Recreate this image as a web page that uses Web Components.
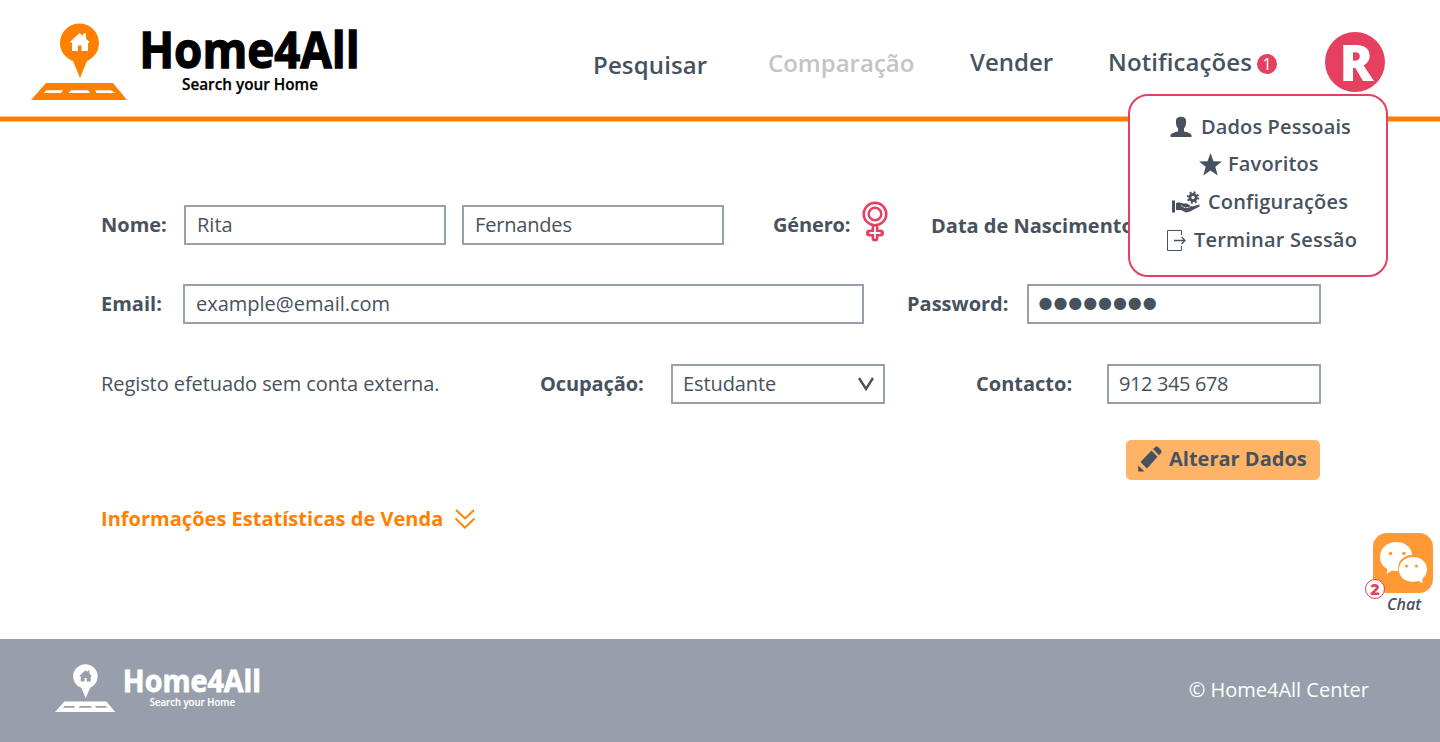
<!DOCTYPE html>
<html lang="pt">
<head>
<meta charset="utf-8">
<title>Home4All</title>
<style>
html,body{margin:0;padding:0}
body{width:1440px;height:742px;overflow:hidden;background:#fff;font-family:"Open Sans",sans-serif;color:#47525e;font-size:20px;line-height:28px}
</style>
</head>
<body>
<home-app></home-app>
<script>
const define = (name, css, html) => customElements.define(name, class extends HTMLElement {
  constructor() {
    super();
    this.attachShadow({ mode: 'open' }).innerHTML = `<style>*{box-sizing:border-box}svg{display:block;flex:none}${css}</style>${html}`;
  }
});

define('brand-logo', `:host{display:block;flex:none}svg{width:100%;height:100%;overflow:visible}
text{font-family:"Open Sans",sans-serif;fill:var(--word)}`, `
<svg viewBox="31 23 327 77" preserveAspectRatio="none">
  <path fill="var(--mark)" d="M80 78 L73 61 C65 58 60 51 60 43 A19.5 19.5 0 0 1 99 43 C99 51 94 58 87 61 Z M46 83 H113 L127 100 H31 Z"/>
  <path fill="var(--hole)" d="M69.5 42.5 L79.5 33 L83 36 V33.5 H86 V38.5 L89.5 42 L88 43.5 V51 H81.5 V45.5 H78 V51 H72 V42.5 Z M46.500 90.200 H63 L61 93 H43.500 Z M71 90.200 H88 L90 93 H68.500 Z M95 90.200 H111 L115.500 93 H96.500 Z"/>
  <text x="139.200" y="67.700" font-size="49.500" font-weight="700" textLength="220.500" lengthAdjust="spacingAndGlyphs" stroke="var(--word)" stroke-width="1.300">Home4All</text>
  <text x="182" y="90" font-size="16" font-weight="600" textLength="136" lengthAdjust="spacingAndGlyphs" stroke="var(--word)" stroke-width=".25">Search your Home</text>
</svg>`);

define('nav-item', `:host{display:flex;align-items:center;gap:5px;font-weight:600;font-size:24px;line-height:32px;white-space:nowrap}`, `<slot></slot><slot name="badge"></slot>`);

define('count-badge', `:host{display:flex;align-items:center;justify-content:center;width:20px;height:20px;border-radius:50%;background:#e54060;color:#fff;font-size:16px;line-height:20px;font-weight:400;letter-spacing:0;box-sizing:border-box;flex:none}
:host([outline]){background:#fff;border:1px solid #e54060;color:#e54060;font-weight:800;line-height:18px}`, `<slot></slot>`);

define('user-avatar', `:host{display:flex;justify-content:center;align-items:center;width:60px;height:60px;border-radius:50%;background:#e54060;color:#fff;font-weight:800;font-size:50px;line-height:60px}
span{padding-left:3px}`, `<span><slot></slot></span>`);

define('site-header', `:host{display:block;height:122px}
.bar{display:grid;grid-template-columns:562px 175px 202px 138px 217px 60px;padding-left:31px;height:116px;align-items:start}
brand-logo{width:327px;height:77px;margin-top:23px;--mark:#ff8000;--hole:#fff;--word:#000}
.line{height:6px;background:linear-gradient(#ffbf80 1px,#ff8000 1px 5px,#ffbf80 5px)}`, `
<div class="bar">
  <brand-logo></brand-logo>
  <nav-item style="margin-top:49px;letter-spacing:.14px">Pesquisar</nav-item>
  <nav-item style="margin-top:47px;color:#c4c4c4">Comparação</nav-item>
  <nav-item style="margin-top:46px">Vender</nav-item>
  <nav-item style="margin-top:46px;letter-spacing:.09px">Notificações<count-badge slot="badge" style="margin-top:4px">1</count-badge></nav-item>
  <user-avatar style="margin-top:32px">R</user-avatar>
</div><div class="line"></div>`);

define('menu-item', `:host{display:flex;align-items:center;height:38px;font-weight:600;white-space:nowrap;letter-spacing:.17px}`, `<slot name="icon"></slot><slot></slot>`);

define('user-menu', `:host{display:block;position:absolute;left:1128px;top:94px;width:260px;height:183px;box-sizing:border-box;border:2px solid #e54060;border-radius:20px;background:#fff;padding-top:12px;z-index:2}
svg{fill:#47525e}`, `
<menu-item style="padding-left:40px;height:37px;letter-spacing:.12px"><svg slot="icon" width="22" height="22" viewBox="0 0 22 22" style="margin-right:9px"><path d="M6 4 Q6.500 1 11 .8 Q15.500 1 16 4 V8 Q15.500 11 14 12 V15.500 Q20 16.500 21.500 19 V21 H.5 V19 Q2 16.500 8 15.500 V12 Q6.500 11 6 8 Z"/></svg>Dados Pessoais</menu-item>
<menu-item style="padding-left:69px"><svg slot="icon" width="23" height="23" viewBox="0 0 23 23" style="margin-right:6px"><path d="M11.500 0 L14.500 8.200 L23 8.500 L16.300 13.700 L18.700 22.500 L11.500 17.500 L4.300 22.500 L6.700 13.700 L0 8.500 L8.500 8.200 Z"/></svg>Favoritos</menu-item>
<menu-item style="padding-left:42px"><svg slot="icon" width="28" height="22" viewBox="0 0 28 22" style="margin-right:8px"><path d="M0 9.500 H3 V21.500 H0 Z M4 12 L7 11.200 L11 12.500 H15 L18 14.500 L20 15.500 L27.500 13.500 V15.500 L18 20.500 L14 21.500 L9 19 H4 Z"/><path fill="none" stroke="#fff" stroke-width=".8" stroke-dasharray="2 1" d="M9 14.500 L12 16.500 H17 L18.500 15.500"/><circle cx="21" cy="6.500" r="3.100" fill="none" stroke="#47525e" stroke-width="2.800"/><circle cx="21" cy="6.500" r="5.200" fill="none" stroke="#47525e" stroke-width="2" stroke-dasharray="2 2.084"/></svg>Configurações</menu-item>
<menu-item style="padding-left:37px;letter-spacing:.2px"><svg slot="icon" width="19" height="21" viewBox="0 0 19 21" style="margin-right:8px"><path fill="none" stroke="#47525e" d="M14.500 5 V.5 H.5 V20.500 H14.500 V16"/><path fill="none" stroke="#47525e" stroke-width="1.300" d="M7 10.500 H18 M14.500 7 L18 10.500 L14.500 14"/></svg>Terminar Sessão</menu-item>`);

define('form-row', `:host{display:grid;grid-template-columns:var(--cols);height:40px;margin-bottom:var(--gap,40px);align-items:center}`, `<slot></slot>`);
define('field-label', `:host{display:block;font-weight:700;white-space:nowrap}`, `<slot></slot>`);
define('text-field', `:host{display:flex;align-items:center;justify-content:space-between;height:40px;border:2px solid #98a0ab;box-sizing:border-box;padding:0 10px;background:#fff;white-space:nowrap}`, `<span><slot></slot></span><slot name="end"></slot>`);
define('password-dots', `:host{display:block;font-family:"DejaVu Sans",sans-serif;font-size:16px;letter-spacing:.93px;line-height:34px;height:36px;margin-left:-.5px}`, `●●●●●●●●`);

define('action-button', `:host{display:flex;align-items:center;width:194px;height:40px;box-sizing:border-box;border-radius:5px;background:#ffb366;font-weight:700;padding:0 0 2px 12px;white-space:nowrap;gap:7px}svg{fill:#47525e}`, `
<svg width="24" height="26" viewBox="0 0 24 26"><path d="M13.500 4.500 L19.500 10.800 L9 22.500 L2.500 16 Z M15 3 L18 .5 H19.500 L23.500 4.500 V6.500 L21 9.200 Z M.2 19.500 L6.500 25.500 H.2 Z"/></svg><slot></slot>`);

define('profile-form', `:host{display:block;padding:83px 0 0 101px;height:517px;box-sizing:border-box}`, `
<form-row style="--cols:83px 262px 16px 262px 49px 88px 70px 210px;--gap:39px">
  <field-label>Nome:</field-label><text-field style="padding-left:11px">Rita</text-field><i></i><text-field style="padding-left:11px;letter-spacing:-.18px">Fernandes</text-field><i></i>
  <field-label style="letter-spacing:-.15px">Género:</field-label>
  <svg width="28" height="42" viewBox="0 0 28 42" style="margin-top:-9px" fill="none" stroke="#e54060"><circle cx="14" cy="14" r="11.300" stroke-width="2.500"/><circle cx="14" cy="14" r="6.300" stroke-width="2.500"/><path stroke-width="7" stroke-linecap="round" d="M14 28 V38 M8.500 33 H19.500"/><path stroke="#fff" stroke-width="1.800" d="M14 26.500 V38.500 M8.500 33 H19.500"/></svg>
  <field-label style="margin-top:2px">Data de Nascimento:</field-label>
</form-row>
<form-row style="--cols:82px 681px 43px 120px 294px">
  <field-label>Email:</field-label><text-field style="padding-left:11px">example@email.com</text-field><i></i><field-label>Password:</field-label><text-field><password-dots></password-dots></text-field>
</form-row>
<form-row style="--cols:439px 131px 214px 91px 131px 214px;--gap:36px">
  <span style="letter-spacing:-.08px">Registo efetuado sem conta externa.</span><field-label style="letter-spacing:-.1px">Ocupação:</field-label>
  <text-field style="letter-spacing:-.1px">Estudante<svg slot="end" width="16" height="14" viewBox="0 0 16 14" fill="none" stroke="#47525e" stroke-width="2.400" style="margin-right:-1px"><path d="M1 1 L8 12 L15 1"/></svg></text-field><i></i>
  <field-label>Contacto:</field-label><text-field style="letter-spacing:-.38px">912 345 678</text-field>
</form-row>
<form-row style="--cols:1025px 194px;--gap:19px"><i></i><action-button>Alterar Dados</action-button></form-row>
<form-row style="--cols:354px 22px"><field-label style="color:#ff8000;letter-spacing:.02px">Informações Estatísticas de Venda</field-label>
<svg width="20" height="20" viewBox="0 0 20 20" fill="none" stroke="#ff8000" stroke-width="1.900"><path d="M1 1 L10 9.500 L19 1 M.5 9.500 L10 18.700 L19.500 9.500"/></svg></form-row>`);

define('chat-launcher', `:host{display:block;position:absolute;left:1365px;top:533px;width:68px;height:84px}
.tile{margin-left:8px;width:60px;height:60px;border-radius:14px;background:#ff9933}
count-badge{position:absolute;left:0;top:46px}
em{display:block;font-size:16px;line-height:22px;font-weight:600;margin-left:22px}`, `
<div class="tile"><svg width="60" height="60" viewBox="0 0 60 60"><path fill="#fff" d="M23 9 C32.500 9 39 15 39 22 C30 22 24 29 25.500 37.500 Q22 38.500 19 37.500 L13.500 41 L14.500 36 C9.500 33.500 7 29 7 24 C7 15.500 14 9 23 9 Z M40 24 C48 24 54 29 54 36.500 C54 40.500 52 43.500 49.500 45.500 V50 L45.500 48 C34 51 26 45 26 37 C26 29.500 32 24 40 24 Z"/><g fill="#ff9933"><circle cx="17.500" cy="20.500" r="1.800"/><circle cx="31" cy="20.500" r="1.800"/><circle cx="33.500" cy="33" r="1.600"/><circle cx="43.500" cy="33" r="1.600"/></g></svg></div>
<count-badge outline>2</count-badge><em>Chat</em>`);

define('site-footer', `:host{display:flex;justify-content:space-between;align-items:flex-start;height:103px;background:#989faa;color:#fff;padding:25px 71px 0 55px;box-sizing:border-box}
brand-logo{width:205px;height:48px;--mark:#fff;--hole:#989faa;--word:#fff}
span{margin-top:12px}`, `<brand-logo></brand-logo><span>© Home4All Center</span>`);

define('home-app', `:host{display:block;position:relative;width:1440px;height:742px}`, `
<site-header></site-header><profile-form></profile-form><site-footer></site-footer><user-menu></user-menu><chat-launcher></chat-launcher>`);
</script>
</body>
</html>
